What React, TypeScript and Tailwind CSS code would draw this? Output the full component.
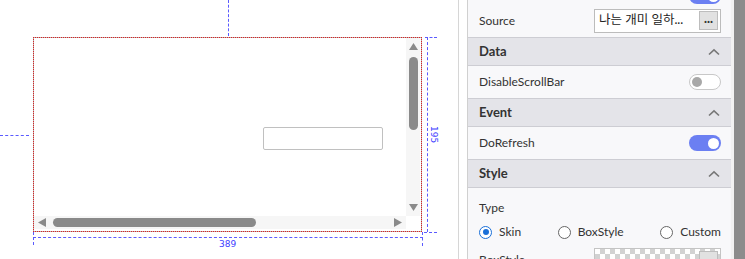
import React from "react";

function Toggle({ on }: { on: boolean }) {
  return on ? (
    <div className="flex h-4 w-8 shrink-0 items-center justify-end rounded-full bg-[#6b7ff2] pr-[2px]">
      <div className="h-[11px] w-[11px] rounded-full bg-white" />
    </div>
  ) : (
    <div className="flex h-4 w-8 shrink-0 items-center rounded-full border border-[#c8c8c8] bg-white pl-[2px]">
      <div className="h-[10px] w-[10px] rounded-full bg-[#a8a8a8]" />
    </div>
  );
}

function Chevron() {
  return (
    <svg width="12" height="8" viewBox="0 0 12 8" className="mr-[1px]">
      <polyline points="1,6.5 6,1.8 11,6.5" fill="none" stroke="#777" strokeWidth="1.6" />
    </svg>
  );
}

function SectionHeader({ title }: { title: string }) {
  return (
    <div className="box-border flex h-[29px] shrink-0 items-center justify-between border-y border-[#cdcdd3] bg-[#e4e4e9] pl-[11px] pr-[10px] text-[13px] font-bold text-[#333]">
      <span>{title}</span>
      <Chevron />
    </div>
  );
}

function Radio({ label, checked }: { label: string; checked?: boolean }) {
  return (
    <div className="flex items-center gap-[7px]">
      {checked ? (
        <div className="flex h-[13px] w-[13px] items-center justify-center rounded-full border-[1.5px] border-[#1a6fd8] bg-white">
          <div className="h-[6px] w-[6px] rounded-full bg-[#1a6fd8]" />
        </div>
      ) : (
        <div className="h-[13px] w-[13px] rounded-full border border-[#666] bg-white" />
      )}
      <span>{label}</span>
    </div>
  );
}

function Tri({ dir }: { dir: "up" | "down" | "left" | "right" }) {
  const pts = {
    up: "4.5,0 9,7 0,7",
    down: "0,0 9,0 4.5,7",
    left: "8,0 8,9 0,4.5",
    right: "0,0 8,4.5 0,9",
  }[dir];
  const vertical = dir === "up" || dir === "down";
  return (
    <svg width={vertical ? 9 : 8} height={vertical ? 7 : 9} className="shrink-0">
      <polygon points={pts} fill="#8a8a8a" />
    </svg>
  );
}

export default function App() {
  return (
    <div className="flex h-[259px] w-[745px] overflow-hidden bg-white font-['Lato','Noto_Sans_CJK_KR',sans-serif]">
      {/* 디자인 캔버스 */}
      <div className="relative h-[259px] w-[458px] shrink-0 bg-white">
        <div className="absolute left-[228px] top-0 h-[36px] border-l border-dashed border-[#5a5aff]" />
        <div className="absolute left-0 top-[135px] w-[29px] border-t border-dashed border-[#5a5aff]" />
        <div className="absolute left-[427px] top-[37px] h-[195px] border-l border-dashed border-[#5a5aff]" />
        <div className="absolute left-[425px] top-[37px] w-[12px] border-t border-dashed border-[#5a5aff]" />
        <div className="absolute left-[424px] top-[232px] w-[13px] border-t border-dashed border-[#5a5aff]" />
        <div className="absolute left-[33px] top-[237px] w-[390px] border-t border-dashed border-[#5a5aff]" />
        <div className="absolute left-[33px] top-[232px] h-[13px] border-l border-dashed border-[#5a5aff]" />
        <div className="absolute left-[422px] top-[232px] h-[14px] border-l border-dashed border-[#5a5aff]" />
        <div className="absolute left-[219px] top-[238px] font-['DejaVu_Sans',sans-serif] text-[9px] leading-[12px] text-[#4040ff]">
          389
        </div>
        <div className="absolute left-[428px] top-[126px] font-['DejaVu_Sans',sans-serif] text-[9px] leading-[12px] text-[#4040ff] [writing-mode:vertical-rl]">
          195
        </div>

        {/* 선택된 컴포넌트 */}
        <div className="absolute left-[33px] top-[37px] box-border h-[195px] w-[389px] border border-dotted border-[#e02020] bg-[#b4b4b4]">
          <div className="flex h-full w-full flex-col bg-white pb-[1px] pr-[1px]">
            <div className="flex h-[178px] shrink-0">
              <div className="flex-1 pl-[229px] pt-[89px]">
                <div className="h-[23px] w-[120px] rounded-[2px] border border-[#c0c0c0] bg-white" />
              </div>
              <div className="flex w-[14px] flex-col items-center bg-[#f6f6f6] pb-[5px] pt-[5px]">
                <Tri dir="up" />
                <div className="mt-[7px] h-[73px] w-[9px] rounded-full bg-[#8a8a8a]" />
                <div className="flex-1" />
                <Tri dir="down" />
              </div>
            </div>
            <div className="flex h-[13px] shrink-0">
              <div className="flex flex-1 items-center bg-[#f6f6f6] pl-[4px] pr-[4px]">
                <Tri dir="left" />
                <div className="ml-[7px] h-[9px] w-[203px] rounded-full bg-[#8a8a8a]" />
                <div className="flex-1" />
                <Tri dir="right" />
              </div>
              <div className="w-[14px] bg-white" />
            </div>
          </div>
        </div>
      </div>

      <div className="w-px shrink-0 bg-[#d6d6d6]" />
      <div className="w-[8px] shrink-0 bg-white" />

      {/* 속성 패널 */}
      <div className="flex w-[264px] shrink-0 flex-col border-l border-[#d0d0d0] bg-[#f8f8fa] text-[12px] text-[#333]">
        <div className="flex h-[4px] shrink-0 items-end justify-end overflow-hidden pr-[10px]">
          <Toggle on />
        </div>
        <div className="flex h-[33px] shrink-0 items-center justify-between pl-[11px] pr-[10px]">
          <span>Source</span>
          <div className="flex h-[24px] w-[127px] items-center justify-between border border-[#bcbcbc] bg-white pl-[4px] pr-[2px]">
            <span className="text-[12.5px] text-[#222]">나는 개미 일하...</span>
            <div className="flex h-[19px] w-[19px] items-center justify-center border border-[#bdbdbd] bg-[#e1e1e1] text-[11px] font-bold leading-none text-[#333]">
              ···
            </div>
          </div>
        </div>
        <SectionHeader title="Data" />
        <div className="flex h-[32px] shrink-0 items-center justify-between pl-[11px] pr-[10px]">
          <span>DisableScrollBar</span>
          <Toggle on={false} />
        </div>
        <SectionHeader title="Event" />
        <div className="flex h-[32px] shrink-0 items-center justify-between pl-[11px] pr-[10px]">
          <span>DoRefresh</span>
          <Toggle on />
        </div>
        <SectionHeader title="Style" />
        <div className="flex shrink-0 flex-col pl-[11px] pr-[10px] pt-[11px]">
          <div className="h-[18px] leading-[18px]">Type</div>
          <div className="mt-[6px] flex h-[18px] items-center justify-between">
            <Radio label="Skin" checked />
            <Radio label="BoxStyle" />
            <Radio label="Custom" />
          </div>
          <div className="mt-[7px] flex h-[24px] items-center justify-between">
            <span>BoxStyle</span>
            <div className="flex h-[24px] w-[127px] items-start justify-end border border-[#c4c4c4] bg-[image:conic-gradient(#d2d2d2_25%,#fff_0_50%,#d2d2d2_0_75%,#fff_0)] bg-[length:10px_10px] pr-[2px] pt-[2px]">
              <div className="h-[19px] w-[19px] border border-[#bdbdbd] bg-[#e1e1e1]" />
            </div>
          </div>
        </div>
      </div>

      <div className="w-[3px] shrink-0 bg-[#f2f2f2]" />
      <div className="w-[11px] shrink-0 bg-[#8c8c8c]" />
    </div>
  );
}
